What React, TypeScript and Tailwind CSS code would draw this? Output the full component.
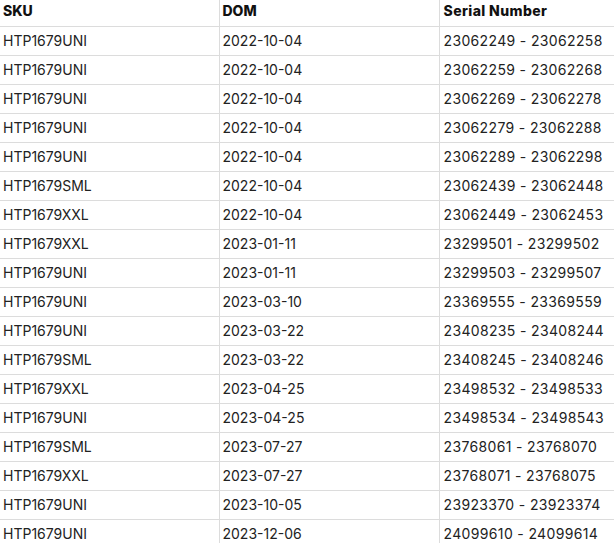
const rows: [string, string, string][] = [
  ["HTP1679UNI", "2022-10-04", "23062249 - 23062258"],
  ["HTP1679UNI", "2022-10-04", "23062259 - 23062268"],
  ["HTP1679UNI", "2022-10-04", "23062269 - 23062278"],
  ["HTP1679UNI", "2022-10-04", "23062279 - 23062288"],
  ["HTP1679UNI", "2022-10-04", "23062289 - 23062298"],
  ["HTP1679SML", "2022-10-04", "23062439 - 23062448"],
  ["HTP1679XXL", "2022-10-04", "23062449 - 23062453"],
  ["HTP1679XXL", "2023-01-11", "23299501 - 23299502"],
  ["HTP1679UNI", "2023-01-11", "23299503 - 23299507"],
  ["HTP1679UNI", "2023-03-10", "23369555 - 23369559"],
  ["HTP1679UNI", "2023-03-22", "23408235 - 23408244"],
  ["HTP1679SML", "2023-03-22", "23408245 - 23408246"],
  ["HTP1679XXL", "2023-04-25", "23498532 - 23498533"],
  ["HTP1679UNI", "2023-04-25", "23498534 - 23498543"],
  ["HTP1679SML", "2023-07-27", "23768061 - 23768070"],
  ["HTP1679XXL", "2023-07-27", "23768071 - 23768075"],
  ["HTP1679UNI", "2023-10-05", "23923370 - 23923374"],
  ["HTP1679UNI", "2023-12-06", "24099610 - 24099614"],
];

export default function App() {
  return (
    <div className="w-[614px] h-[543px] overflow-hidden bg-white font-['Inter',sans-serif]">
      <table className="w-[614px] border-collapse table-fixed text-[14px] text-[#222]">
        <colgroup>
          <col className="w-[219px]" />
          <col className="w-[220px]" />
          <col />
        </colgroup>
        <thead>
          <tr className="h-[25px]">
            {["SKU", "DOM", "Serial Number"].map((h, i) => (
              <th
                key={h}
                className={`text-left font-extrabold text-[#111] px-[3px] pb-[5px] border-b border-[#dcdcdc] ${i > 0 ? "border-l" : ""} ${i === 2 ? "pl-[4px] tracking-[0.4px]" : ""}`}
              >
                {h}
              </th>
            ))}
          </tr>
        </thead>
        <tbody>
          {rows.map((r, idx) => (
            <tr key={idx} className="h-[29px]">
              {r.map((c, i) => (
                <td
                  key={i}
                  className={`px-[3px] pb-[2px] border-b border-[#dcdcdc] ${i > 0 ? "border-l" : ""} ${i === 2 ? "pl-[4px] tracking-[0.35px]" : ""}`}
                >
                  {c}
                </td>
              ))}
            </tr>
          ))}
        </tbody>
      </table>
    </div>
  );
}
